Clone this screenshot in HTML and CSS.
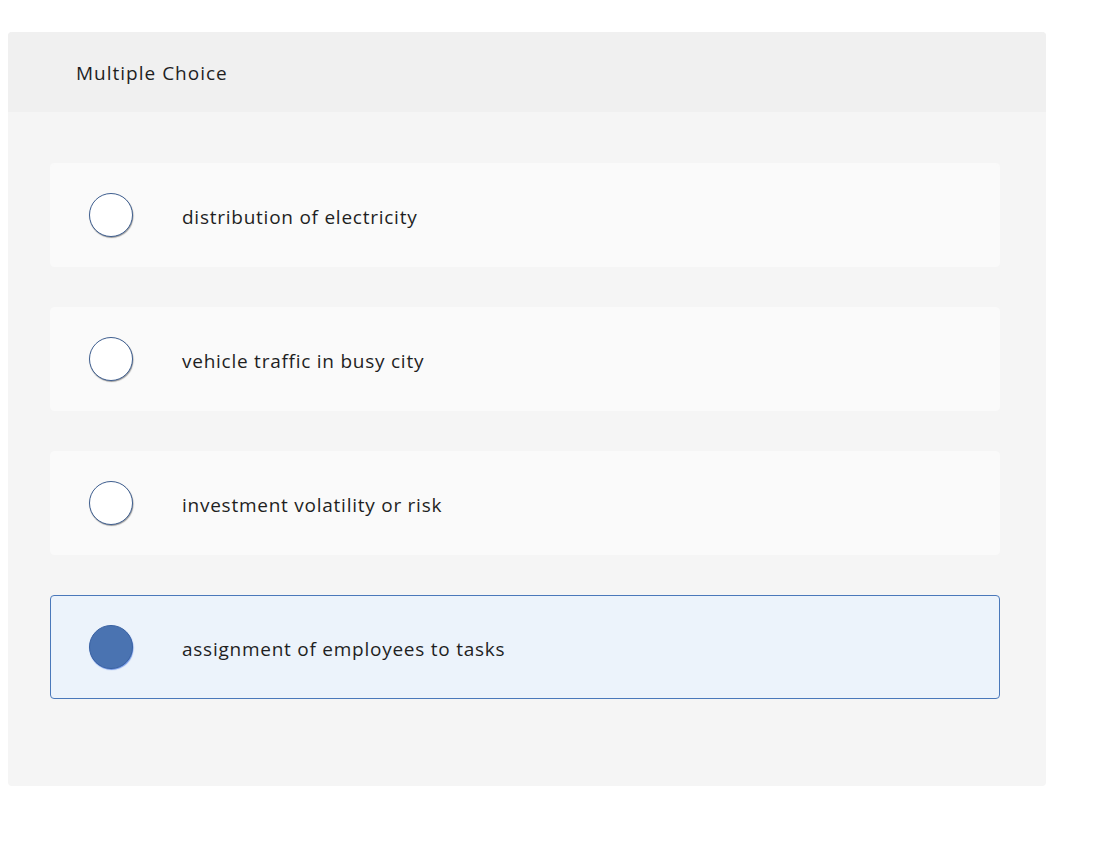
FILE: index.html
```html
<!DOCTYPE html>
<html>
<head>
<meta charset="utf-8">
<link rel="stylesheet" href="styles.css">
</head>
<body>
<div class="card">
  <div class="card-header">Multiple Choice</div>
  <div class="card-body">
    <div class="option">
      <span class="radio"></span>
      <span class="label">distribution of electricity</span>
    </div>
    <div class="option">
      <span class="radio"></span>
      <span class="label">vehicle traffic in busy city</span>
    </div>
    <div class="option">
      <span class="radio"></span>
      <span class="label">investment volatility or risk</span>
    </div>
    <div class="option selected">
      <span class="radio"></span>
      <span class="label">assignment of employees to tasks</span>
    </div>
  </div>
</div>
</body>
</html>
```
FILE: styles.css
```css
html, body {
  margin: 0;
  padding: 0;
  background: #ffffff;
}
body {
  padding: 32px 0 0 8px;
  font-family: "Open Sans", "Liberation Sans", sans-serif;
  color: #1f1f1f;
}
.card {
  width: 1038px;
  height: 754px;
  background: #f5f5f5;
  border-radius: 4px;
  overflow: hidden;
}
.card-header {
  height: 80px;
  background: #f0f0f0;
  box-sizing: border-box;
  padding: 2px 0 0 68px;
  display: flex;
  align-items: center;
  font-size: 19px;
  letter-spacing: 1px;
  color: #1f1f1f;
}
.card-body {
  padding: 51px 0 0 42px;
  display: flex;
  flex-direction: column;
  gap: 40px;
}
.option {
  width: 950px;
  height: 104px;
  box-sizing: border-box;
  background: #fafafa;
  border: 1px solid #fafafa;
  border-radius: 4px;
  display: flex;
  align-items: center;
  padding-left: 38px;
}
.option.selected {
  background: #ecf3fb;
  border-color: #4a78ba;
}
.radio {
  width: 44px;
  height: 44px;
  box-sizing: border-box;
  border-radius: 50%;
  border: 1.5px solid #3f5f90;
  background: #ffffff;
  box-shadow: 0.5px 1px 1px rgba(40, 40, 40, 0.45);
  flex: none;
}
.option.selected .radio {
  background: #4a73b1;
  border-color: #3a62a2;
  box-shadow: 0.5px 1px 1px rgba(60, 110, 220, 0.7);
}
.label {
  margin-left: 49px;
  padding-top: 3px;
  font-size: 19px;
  letter-spacing: 0.75px;
  color: #1f1f1f;
}
```
